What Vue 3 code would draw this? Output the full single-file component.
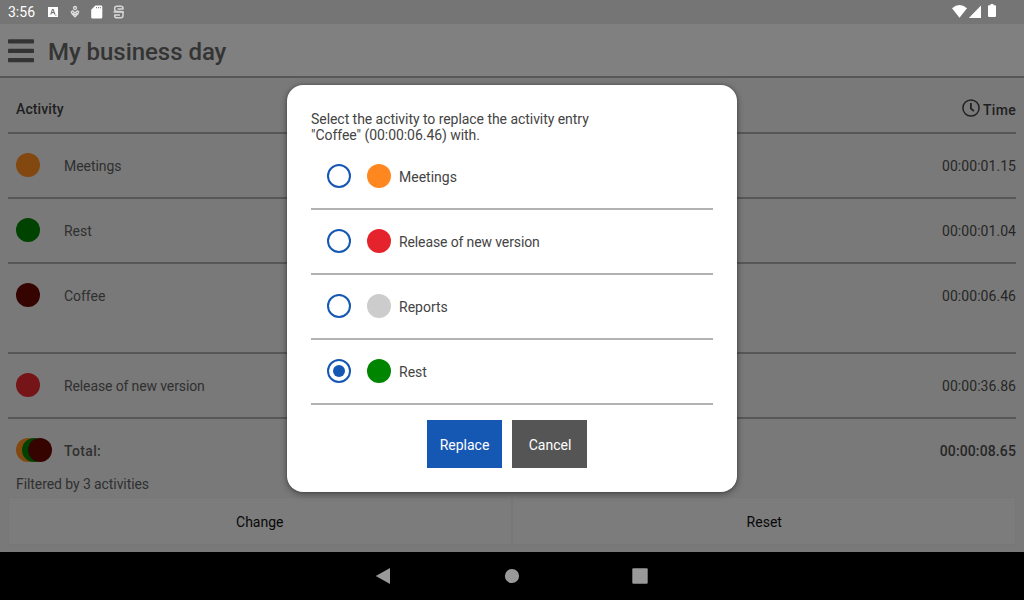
<script setup>
const entries = [
  { name: 'Meetings', color: '#824810', time: '00:00:01.15' },
  { name: 'Rest', color: '#004300', time: '00:00:01.04' },
  { name: 'Coffee', color: '#350300', time: '00:00:06.46', tall: true },
  { name: 'Release of new version', color: '#761518', time: '00:00:36.86', tight: true },
]
const options = [
  { name: 'Meetings', color: '#ff871f' },
  { name: 'Release of new version', color: '#e5232c', tight: true },
  { name: 'Reports', color: '#cccccc' },
  { name: 'Rest', color: '#008500', checked: true },
]
</script>

<template>
  <div class="screen">
    <div class="status">
      <span class="clock">3:56</span>
      <svg class="left-icons" width="80" height="24" viewBox="0 0 80 24">
        <path fill="#fff" fill-rule="evenodd" d="M1 7h10v10H1zM5 9L3.200 14.500h1.200l.4-1.300h2.100l.4 1.300h1.200L6.600 9zM5.100 12.100l.7-2 .7 2zM8.400 14.700h1v1h-1z" />
        <g fill="none" stroke="#dedede" stroke-width="1.300">
          <circle cx="28" cy="8" r="1.500" />
          <path d="M24.300 11.700L25.700 10.900 28 12.900 30.300 10.900 31.700 11.700 30.900 14 28 16.900 25.100 14zM25.700 13L28 14.900 30.300 13" />
        </g>
        <path fill="#fff" fill-rule="evenodd" d="M48.400 5.500H54q1.300 0 1.300 1.300v10.400q0 1.300-1.300 1.300h-8.500q-1.300 0-1.300-1.300V9.700zM49 7v1.300h.9V7zM51 7v1.300h.9V7zM52.900 7v1.300h.9V7z" />
        <g fill="none" stroke="#d6d6d6" stroke-width="1.500">
          <path d="M76 9.200V8.200Q76 6.200 73.800 6.200H70Q67.700 6.200 67.700 8.300V9.300Q67.700 11.500 70 11.500H73.800Q76 11.500 76 13.700V15.500Q76 17.800 73.700 17.800H70Q67.700 17.800 67.700 16V14.800" />
          <path d="M76.300 9H70.500M67.300 15H73M66.500 12H77" />
        </g>
      </svg>
      <svg class="right-icons" width="48" height="24" viewBox="0 0 48 24">
        <path fill="#fff" d="M0 8.200Q7.500 1.900 15 8.200L7.500 17.700zM29 5.500V18H16.800zM36 6.200q0-1 1-1h1.500V4h3v1.200H43q1 0 1 1V16q0 1-1 1h-6q-1 0-1-1z" />
      </svg>
    </div>
    <header class="appbar">
      <svg width="26" height="24" viewBox="0 0 26 24">
        <g fill="#343434"><rect width="26" height="4.200" y=".3" rx=".7" /><rect width="26" height="4.200" y="9.800" rx=".7" /><rect width="26" height="4.200" y="19.100" rx=".7" /></g>
      </svg>
      <h1>My business day</h1>
    </header>
    <main class="list">
      <div class="head">
        <span>Activity</span>
        <span class="time-head">
          <svg width="18" height="18" viewBox="0 0 18 18" fill="none" stroke="#222"><circle cx="9" cy="9" r="8.100" stroke-width="1.500" /><path d="M8.900 4v5.500l3 2.700" stroke-width="1.800" /></svg>
          <span class="time-label">Time</span>
        </span>
      </div>
      <div v-for="e in entries" :key="e.name" class="row" :class="{ tall: e.tall }">
        <i class="dot" :style="{ background: e.color }"></i>
        <span class="name" :class="{ tight: e.tight }">{{ e.name }}</span>
        <span class="time">{{ e.time }}</span>
      </div>
      <div class="row total">
        <span class="stack"><i class="dot orange"></i><i class="dot green"></i><i class="dot brown"></i></span>
        <span class="name">Total:</span>
        <span class="time">00:00:08.65</span>
      </div>
      <p class="filter">Filtered by 3 activities</p>
      <div class="actions"><button>Change</button><button class="reset">Reset</button></div>
    </main>
    <nav class="nav">
      <svg width="1024" height="48" viewBox="0 0 1024 48" fill="#999">
        <path d="M375.800 24L390 16v16z" /><circle cx="512" cy="24" r="7.100" /><rect x="632.300" y="16.300" width="15.400" height="15.400" rx="1" />
      </svg>
    </nav>
    <section class="dialog">
      <p class="message">Select the activity to replace the activity entry<br>"Coffee" (00:00:06.46) with.</p>
      <div v-for="o in options" :key="o.name" class="option">
        <i class="radio" :class="{ checked: o.checked }"></i>
        <i class="dot" :style="{ background: o.color }"></i>
        <span :class="{ tight: o.tight }">{{ o.name }}</span>
      </div>
      <div class="buttons"><button class="replace">Replace</button><button class="cancel">Cancel</button></div>
    </section>
  </div>
</template>

<style scoped>
* { box-sizing: border-box; }
.screen { position: relative; width: 1024px; height: 600px; overflow: hidden; background: #797979; color: #303030; font: 14px/16px Roboto, sans-serif; display: flex; flex-direction: column; }
svg { display: block; flex: none; }
button { font: inherit; border: 0; padding: 0; margin: 0; border-radius: 0; letter-spacing: inherit; }
.status { height: 24px; background: #757575; display: flex; align-items: center; padding: 0 24px 0 8px; color: #fff; }
.clock { width: 39px; padding-bottom: 1px; }
.right-icons { margin-left: auto; }
.appbar { height: 54px; background: #808080; border-bottom: 2px solid #575757; display: flex; align-items: center; padding: 2px 8px 0; gap: 14px; }
h1 { margin: 2px 0 0; font-size: 24px; line-height: 28px; font-weight: 500; letter-spacing: -.04px; color: #343434; }
.list { height: 474px; padding: 0 8px; display: flex; flex-direction: column; }
.head { height: 56px; border-bottom: 2px solid #575757; display: flex; justify-content: space-between; padding: 23px 0 0 8px; font-weight: 500; letter-spacing: .12px; color: #202020; }
.time-head { display: flex; gap: 3px; margin-top: -2px; }
.time-label { padding-top: 3px; letter-spacing: .3px; }
.row { height: 65px; border-bottom: 2px solid #575757; display: flex; padding: 19px 0 0 8px; flex: none; }
.row.tall { height: 90px; }
.row.total { height: 57px; border: 0; font-weight: 500; }
.dot { display: block; width: 24px; height: 24px; border-radius: 50%; flex: none; }
.row > .dot { margin-right: 24px; }
.name { padding-top: 5px; letter-spacing: -.04px; }
.tight { letter-spacing: -.12px; }
.total .name { letter-spacing: .35px; }
.time { margin-left: auto; padding-top: 5px; color: #262626; letter-spacing: .05px; }
.total .time { letter-spacing: .12px; }
.stack { display: flex; width: 48px; }
.stack .dot + .dot { margin-left: -18px; }
.orange { background: #824810; }
.green { background: #004300; }
.brown { background: #350300; }
.filter { margin: 0 0 0 8px; height: 21px; letter-spacing: -.08px; }
.actions { display: flex; height: 48px; }
.actions button { flex: 1; background: #7c7c7c; border: 1px solid #777; color: #080808; padding-top: 1px; }
.actions .reset { padding-left: 1px; }
.nav { height: 48px; background: #000; flex: none; }
.dialog { position: absolute; left: 287px; top: 85px; width: 450px; height: 407px; background: #fff; border-radius: 16px; padding: 26px 24px 24px; color: #444; box-shadow: 0 2px 7px rgba(0,0,0,.4), 0 0 3px rgba(0,0,0,.25); }
.message { margin: 0; height: 34px; letter-spacing: -.05px; }
.option { height: 65px; border-bottom: 2px solid #b2b2b2; display: flex; padding: 19px 0 0 16px; }
.option span { padding: 5px 0 0 8px; }
.radio { width: 24px; height: 24px; border: 2px solid #1558b3; border-radius: 50%; margin-right: 16px; padding: 4px; }
.checked::after { content: ""; display: block; width: 12px; height: 12px; border-radius: 50%; background: #1558b3; }
.buttons { display: flex; gap: 10px; justify-content: center; padding: 15px 10px 0 0; }
.buttons button { width: 75px; height: 48px; color: #fff; padding-top: 2px; }
.replace { background: #1558b3; }
.buttons .cancel { background: #555; padding-left: 1px; }
</style>

<style>
body { margin: 0; }
</style>
